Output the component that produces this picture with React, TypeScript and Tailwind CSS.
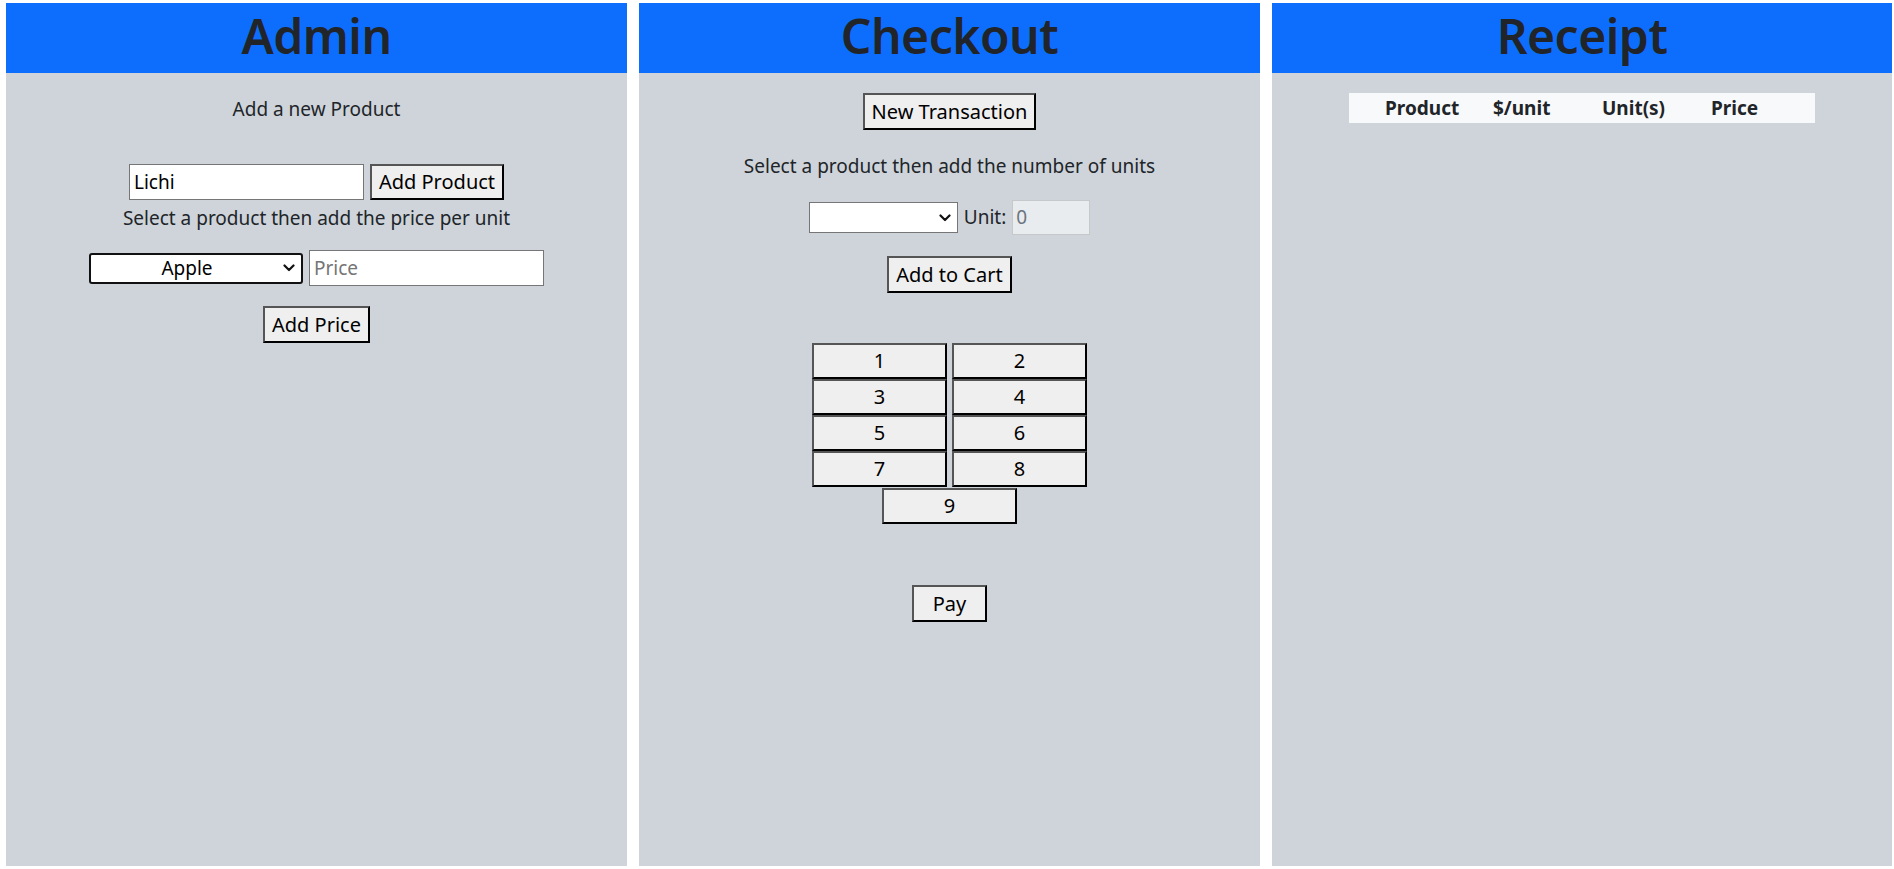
import React from "react";

const FONT = { fontFamily: '"Noto Sans", "Open Sans", sans-serif' };

function Chevron() {
  return (
    <svg width="12" height="8" viewBox="0 0 12 8" className="block">
      <path d="M1.5 1.5 L6 6 L10.5 1.5" fill="none" stroke="#111" strokeWidth="2.2" strokeLinecap="round" strokeLinejoin="round" />
    </svg>
  );
}

function Btn({ children, className = "" }: { children: React.ReactNode; className?: string }) {
  return (
    <button
      className={
        "box-border bg-[#efefef] text-black text-[20px] leading-none border-2 border-t-[#555] border-l-[#555] border-b-black border-r-black flex items-center justify-center " +
        className
      }
    >
      {children}
    </button>
  );
}

function Header({ title }: { title: string }) {
  return (
    <div className="h-[70px] bg-[#0d6efd] flex items-center justify-center shrink-0">
      <h1 className="text-[48px] font-semibold text-[#212529] leading-none mt-[-4px] tracking-[-0.5px]">{title}</h1>
    </div>
  );
}

function Admin() {
  return (
    <div className="w-[621px] h-[863px] bg-[#ced4da] flex flex-col">
      <Header title="Admin" />
      <div className="flex flex-col items-center">
        <p className="text-[19px] text-[#212529] leading-none mt-[27px]">Add a new Product</p>
        <div className="flex items-center gap-[6px] mt-[45px]">
          <div className="box-border w-[235px] h-[36px] bg-white border border-[#767676] flex items-center pl-[4px] text-[19px] text-black">
            Lichi
          </div>
          <Btn className="h-[36px] px-[7px]">Add Product</Btn>
        </div>
        <p className="text-[19px] text-[#212529] leading-none mt-[9px]">Select a product then add the price per unit</p>
        <div className="flex items-center gap-[6px] mt-[22px]">
          <div className="box-border w-[214px] h-[31px] bg-white border-2 border-[#111] rounded-[3px] flex items-center pr-[6px]">
            <span className="flex-1 text-center text-[19px] text-black leading-none">Apple</span>
            <Chevron />
          </div>
          <div className="box-border w-[235px] h-[36px] bg-white border border-[#767676] flex items-center pl-[4px] text-[19px] text-[#757575]">
            Price
          </div>
        </div>
        <Btn className="h-[37px] px-[7px] mt-[20px]">Add Price</Btn>
      </div>
    </div>
  );
}

function Checkout() {
  const keys = [1, 2, 3, 4, 5, 6, 7, 8];
  return (
    <div className="w-[621px] h-[863px] bg-[#ced4da] flex flex-col">
      <Header title="Checkout" />
      <div className="flex flex-col items-center">
        <Btn className="h-[37px] px-[7px] mt-[20px]">New Transaction</Btn>
        <p className="text-[19px] text-[#212529] leading-none mt-[27px]">Select a product then add the number of units</p>
        <div className="flex items-center mt-[24px]">
          <div className="box-border w-[149px] h-[31px] bg-white border border-[#767676] flex items-center justify-end pr-[6px]">
            <Chevron />
          </div>
          <span className="text-[19px] text-[#212529] ml-[6px] leading-none">Unit:</span>
          <div className="box-border w-[78px] h-[35px] bg-[#e9ecef] border border-[#c6c8ca] flex items-center pl-[3px] ml-[6px] text-[19px] text-[#6c757d]">
            0
          </div>
        </div>
        <Btn className="h-[37px] px-[7px] mt-[21px]">Add to Cart</Btn>
        <div className="grid grid-cols-[135px_135px] gap-x-[5px] mt-[50px]">
          {keys.map((k) => (
            <Btn key={k} className="h-[36px] w-[135px]">
              {k}
            </Btn>
          ))}
        </div>
        <Btn className="h-[36px] w-[135px] mt-[1px]">9</Btn>
        <Btn className="h-[37px] w-[75px] mt-[61px]">Pay</Btn>
      </div>
    </div>
  );
}

function Receipt() {
  return (
    <div className="w-[620px] h-[863px] bg-[#ced4da] flex flex-col">
      <Header title="Receipt" />
      <div className="flex justify-center mt-[20px]">
        <div className="w-[466px] h-[30px] bg-[#f8f9fa] grid grid-cols-[36px_108px_109px_109px_1fr] items-center text-[19px] font-bold text-[#212529] leading-none">
          <span />
          <span>Product</span>
          <span>$/unit</span>
          <span>Unit(s)</span>
          <span>Price</span>
        </div>
      </div>
    </div>
  );
}

export default function App() {
  return (
    <div className="w-[1894px] h-[869px] bg-white flex gap-[12px] pl-[6px] pt-[3px] box-border" style={FONT}>
      <Admin />
      <Checkout />
      <Receipt />
    </div>
  );
}
